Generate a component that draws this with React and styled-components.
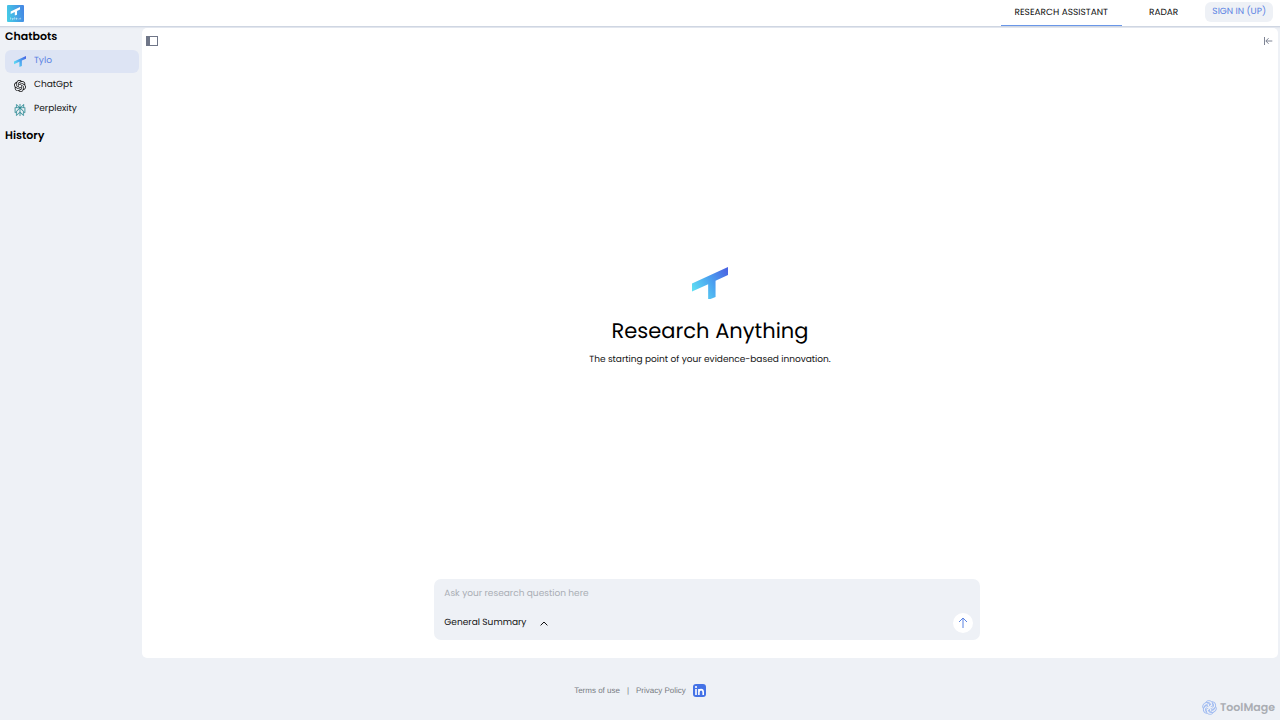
import { useState } from 'react'
import styled, { createGlobalStyle } from 'styled-components'
import { SiOpenai, SiPerplexity } from 'react-icons/si'

const colors = {
  primary: '#5b83e3',
  panel: '#eef1f6',
  active: '#dde4f4',
  black: '#111',
  grey: '#777b82',
}

const GlobalStyle = createGlobalStyle`
  * {
    box-sizing: border-box;
  }
  body {
    margin: 0;
    background: ${colors.panel};
    color: ${colors.black};
    font-family: Poppins, Inter, 'Open Sans', sans-serif;
    font-size: 9px;
    text-rendering: geometricPrecision;
  }
  a {
    color: inherit;
    text-decoration: none;
  }
  button, select, input {
    font: inherit;
    color: inherit;
    text-rendering: inherit;
    border: none;
    background: none;
    padding: 0;
    margin: 0;
    outline: none;
  }
  button, select {
    cursor: pointer;
  }
  svg {
    display: block;
    flex-shrink: 0;
  }
`

const Page = styled.div`
  display: flex;
  flex-direction: column;
  min-height: 100vh;
`

const Header = styled.header`
  display: flex;
  justify-content: space-between;
  height: 27px;
  padding: 0 7px;
  background: white;
  border-bottom: 1px solid #cfd6e2;
  box-shadow: 0 1px 1px #e2e6ee;
`

const HomeLink = styled.a`
  padding-top: 5px;
`

const Nav = styled.nav`
  display: flex;
  align-items: flex-start;
`

const NavLink = styled.a`
  height: 26px;
  padding: 2px 14px 0;
  margin-right: 13px;
  line-height: 23px;
  border-bottom: 1px solid ${({ $active }) => ($active ? '#6a97e8' : 'transparent')};
`

const SignIn = styled.button`
  height: 20px;
  margin-top: 2px;
  padding: 0 7px;
  border-radius: 6px;
  background: ${colors.panel};
  color: ${colors.primary};
`

const Body = styled.div`
  display: flex;
  flex: 1;
  padding: 1px 2px 0 0;
`

const Sidebar = styled.aside`
  width: 142px;
  flex-shrink: 0;
  padding: 0 3px 0 5px;
`

const SideTitle = styled.h2`
  margin: 0;
  font-size: 11px;
  font-weight: 600;
  line-height: 16px;
  color: black;
`

const BotList = styled.ul`
  display: flex;
  flex-direction: column;
  gap: 1px;
  list-style: none;
  margin: 6px 0;
  padding: 0;
`

const BotButton = styled.button`
  display: flex;
  align-items: center;
  gap: 8px;
  width: 100%;
  height: 23px;
  padding: 0 9px;
  line-height: 15px;
  border-radius: 6px;
  background: ${({ $active }) => ($active ? colors.active : 'transparent')};
  color: ${({ $active }) => ($active ? colors.primary : colors.black)};
`

const Main = styled.main`
  display: flex;
  flex-direction: column;
  flex: 1;
  padding-bottom: 18px;
  border-radius: 5px;
  background: white;
`

const Toolbar = styled.div`
  display: flex;
  justify-content: space-between;
  align-items: center;
  height: 26px;
  padding: 0 5px 0 4px;
`

const IconButton = styled.button`
  color: #6f7688;
`

const Hero = styled.section`
  display: flex;
  flex: 1;
  flex-direction: column;
  align-items: center;
  justify-content: center;
  padding-top: 2px;
  text-align: center;
`

const Title = styled.h1`
  margin: 16px 0 3px;
  font-size: 21px;
  font-weight: 400;
  line-height: 34px;
  color: black;
`

const Subtitle = styled.p`
  margin: 0;
  line-height: 16px;
`

const AskForm = styled.form`
  display: flex;
  flex-direction: column;
  justify-content: space-between;
  align-self: center;
  width: 48%;
  min-width: 280px;
  height: 61px;
  margin-right: 6px;
  padding: 7px 7px 7px 10px;
  border-radius: 7px;
  background: ${colors.panel};
`

const AskInput = styled.input`
  width: 100%;
  line-height: 16px;
  &::placeholder {
    color: #a9adb4;
    opacity: 1;
  }
`

const AskActions = styled.div`
  display: flex;
  align-items: center;
  justify-content: space-between;
`

const ModeLabel = styled.label`
  display: flex;
  align-items: center;
  gap: 13px;
`

const ModeSelect = styled.select`
  appearance: none;
  line-height: 16px;
`

const SendButton = styled.button`
  display: flex;
  align-items: center;
  justify-content: center;
  width: 20px;
  height: 20px;
  border-radius: 50%;
  background: white;
  color: ${colors.primary};
`

const Footer = styled.footer`
  display: grid;
  grid-template-columns: 1fr auto 1fr;
  height: 62px;
  padding: 0 5px 4px;
`

const FooterLinks = styled.div`
  grid-column: 2;
  display: flex;
  align-items: center;
  align-self: center;
  gap: 7px;
  padding-top: 6px;
  font-family: 'Liberation Sans', Arial, sans-serif;
  font-size: 8px;
  color: ${colors.grey};
`

const Brand = styled.a`
  display: flex;
  align-items: center;
  align-self: end;
  justify-self: end;
  gap: 3px;
  font-size: 11px;
  font-weight: 600;
  line-height: 18px;
  color: #aaadb3;
`

const TyloMark = ({ id, width }) => (
  <svg width={width} viewBox="0 0 107 98" aria-hidden="true">
    <defs>
      <linearGradient id={id} x1="0" y1="0.7" x2="1" y2="0.1">
        <stop offset="0" stopColor="#5fe0f3" />
        <stop offset="0.5" stopColor="#4ba3f0" />
        <stop offset="1" stopColor="#4a63e2" />
      </linearGradient>
    </defs>
    <path d="M0 49 107 0v24L70 41v48l-22 9V51L0 73z" fill={`url(#${id})`} />
  </svg>
)

const TyloBadge = () => (
  <svg width="17" height="17" viewBox="0 0 17 17" aria-hidden="true">
    <defs>
      <linearGradient id="badge" x1="0" y1="0.6" x2="1" y2="0.4">
        <stop offset="0" stopColor="#45cbe6" />
        <stop offset="1" stopColor="#4588e4" />
      </linearGradient>
    </defs>
    <rect width="17" height="17" rx="1" fill="url(#badge)" />
    <path d="M3.7 6.5 13 2v2.6L10 6v3.7l-2.2.9V7L3.7 8.9z" fill="white" />
    <path d="M3.5 12.5v2M5 13l.7 1.3M6.4 13l-1 2.2M7.6 12.3v2.2M9 13.2h1v1H9zM11 14.3h.3M12.3 13.2v1.2M13.6 12.8v1.6" stroke="white" strokeWidth="0.6" fill="none" opacity="0.8" />
  </svg>
)

const PanelIcon = () => (
  <svg width="12" height="10" viewBox="0 0 12 10" fill="none" aria-hidden="true">
    <rect x="0.5" y="0.5" width="11" height="9" stroke="currentColor" />
    <path d="M1 1h3v8H1z" fill="currentColor" />
  </svg>
)

const CollapseIcon = () => (
  <svg width="10" height="10" viewBox="0 0 10 10" fill="none" stroke="currentColor" strokeWidth="0.9" aria-hidden="true">
    <path d="M1.5 1v8M9.3 5H3M5.6 2.2 2.8 5l2.8 2.8" />
  </svg>
)

const LinkedinIcon = () => (
  <svg width="13" height="13" viewBox="0 0 13 13" aria-hidden="true">
    <rect width="13" height="13" rx="3" fill="#4472e6" />
    <circle cx="3" cy="3" r="1.1" fill="white" />
    <path d="M3 5v6M5.9 5v6M5.9 8.2c0-3.4 4.3-3.4 4.3 0V11" stroke="white" strokeWidth="1.6" fill="none" />
  </svg>
)

// the ToolMage flower is one petal turned around the centre
const petals = [0, 60, 120, 180, 240, 300]

const MageIcon = () => (
  <svg width="15" height="15" viewBox="-8 -8 16 16" fill="none" stroke="#9db9f1" strokeWidth="1" aria-hidden="true">
    {petals.map((angle) => (
      <g key={angle} transform={`rotate(${angle})`}>
        <path d="M-4.2-5C-3-7.9 1-8 2.8-5.6 4.5-3.4 3.4-1 1.3-.8" />
        <path d="M-2.6-4.6C-.8-5.8 1.4-4.8 1.3-2.6" />
      </g>
    ))}
  </svg>
)

const bots = [
  { name: 'Tylo', icon: <TyloMark id="bot" width={12} /> },
  { name: 'ChatGpt', icon: <SiOpenai size={12} /> },
  { name: 'Perplexity', icon: <SiPerplexity size={12} color="#2b8a93" stroke="#2b8a93" strokeWidth={0.4} /> },
]

export default function App() {
  const [bot, setBot] = useState('Tylo')
  const [question, setQuestion] = useState('')

  return (
    <Page>
      <GlobalStyle />
      <Header>
        <HomeLink href="#" aria-label="Tylo">
          <TyloBadge />
        </HomeLink>
        <Nav>
          <NavLink href="#assistant" $active>RESEARCH ASSISTANT</NavLink>
          <NavLink href="#radar">RADAR</NavLink>
          <SignIn type="button">SIGN IN (UP)</SignIn>
        </Nav>
      </Header>
      <Body>
        <Sidebar>
          <SideTitle>Chatbots</SideTitle>
          <BotList>
            {bots.map(({ name, icon }) => (
              <li key={name}>
                <BotButton type="button" $active={bot === name} onClick={() => setBot(name)}>
                  {icon}
                  {name}
                </BotButton>
              </li>
            ))}
          </BotList>
          <SideTitle>History</SideTitle>
        </Sidebar>
        <Main>
          <Toolbar>
            <IconButton type="button" aria-label="Toggle sidebar"><PanelIcon /></IconButton>
            <IconButton type="button" aria-label="Open side panel"><CollapseIcon /></IconButton>
          </Toolbar>
          <Hero>
            <TyloMark id="hero" width={36} />
            <Title>Research Anything</Title>
            <Subtitle>The starting point of your evidence-based innovation.</Subtitle>
          </Hero>
          <AskForm onSubmit={(e) => e.preventDefault()}>
            <AskInput
              aria-label="Research question"
              placeholder="Ask your research question here"
              value={question}
              onChange={(e) => setQuestion(e.target.value)}
            />
            <AskActions>
              <ModeLabel>
                <ModeSelect aria-label="Answer mode">
                  <option>General Summary</option>
                </ModeSelect>
                <svg width="8" height="5" viewBox="0 0 8 5" fill="none" stroke="currentColor" aria-hidden="true">
                  <path d="M.6 4.4 4 1l3.4 3.4" />
                </svg>
              </ModeLabel>
              <SendButton type="submit" aria-label="Send">
                <svg width="10" height="12" viewBox="0 0 10 12" fill="none" stroke="currentColor" aria-hidden="true">
                  <path d="M5 11V1.2M1 5l4-4 4 4" />
                </svg>
              </SendButton>
            </AskActions>
          </AskForm>
        </Main>
      </Body>
      <Footer>
        <FooterLinks>
          <a href="#terms">Terms of use</a>
          <span>|</span>
          <a href="#privacy">Privacy Policy</a>
          <a href="#linkedin" aria-label="LinkedIn"><LinkedinIcon /></a>
        </FooterLinks>
        <Brand href="#toolmage">
          <MageIcon />
          ToolMage
        </Brand>
      </Footer>
    </Page>
  )
}
